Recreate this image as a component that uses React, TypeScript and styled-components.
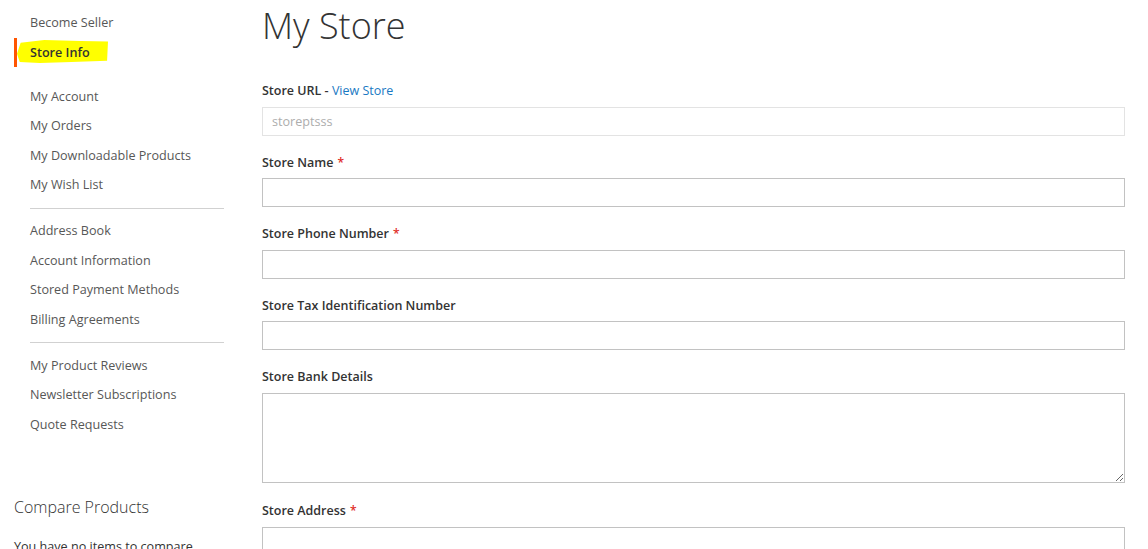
import React from "react";
import styled, { createGlobalStyle } from "styled-components";

const Global = createGlobalStyle`
  html, body { margin: 0; padding: 0; background: #fff; }
  body { font-family: "Open Sans", "Noto Sans", sans-serif; color: #333; font-size: 14px; }
  * { box-sizing: border-box; }
`;

const Page = styled.div`
  display: flex;
  gap: 38px;
  padding: 0 23px 0 14px;
  height: 549px;
  overflow: hidden;
`;

const Sidebar = styled.aside`
  width: 210px;
  flex: none;
  padding-top: 8px;
`;

const Nav = styled.ul`
  list-style: none;
  margin: 0;
  padding: 0;
`;

const NavItem = styled.li<{ $current?: boolean; $gapAfter?: boolean }>`
  position: relative;
  height: 29.5px;
  line-height: 29.5px;
  padding-left: 13px;
  font-size: 12.6px;
  color: ${(p) => (p.$current ? "#333" : "#575757")};
  font-weight: ${(p) => (p.$current ? 600 : 400)};
  border-left: 3px solid ${(p) => (p.$current ? "#ff5501" : "transparent")};
  margin-bottom: ${(p) => (p.$gapAfter ? "14.5px" : "0")};
  white-space: nowrap;
  span { position: relative; }
`;

const Highlight = styled.i`
  position: absolute;
  left: 0px;
  top: 2.5px;
  width: 91px;
  height: 23px;
  background: #ffff00;
  clip-path: polygon(4% 12%, 30% 0%, 70% 4%, 100% 6%, 99% 90%, 60% 96%, 25% 100%, 3% 96%, 0% 60%);
`;

const Divider = styled.li`
  height: 1px;
  background: #d1d1d1;
  margin: 8px 0 7.5px 16px;
`;

const CompareTitle = styled.h2`
  margin: 57px 0 0 0;
  font-weight: 300;
  font-size: 16px;
  line-height: 22px;
  color: #333;
`;

const CompareText = styled.p`
  margin: 20px 0 0;
  font-size: 12.6px;
  color: #333;
`;

const Main = styled.main`
  flex: 1;
  min-width: 0;
`;

const Title = styled.h1`
  margin: 3.5px 0 33.5px;
  font-weight: 300;
  font-size: 36px;
  line-height: 44px;
  color: #333;
`;

const Field = styled.div<{ $tall?: boolean }>`
  margin-bottom: 17px;
  padding-bottom: ${(p) => (p.$tall ? "1.5px" : "0")};
`;

const Label = styled.label`
  display: block;
  font-size: 12.5px;
  font-weight: 600;
  line-height: 20px;
  height: 20px;
  margin-bottom: 5.5px;
  color: #333;
`;

const Req = styled.span`
  color: #e02b27;
  margin-left: 4px;
  font-size: 12px;
`;

const Link = styled.a`
  color: #1979c3;
  text-decoration: none;
  font-weight: 400;
`;

const Input = styled.input`
  display: block;
  width: 100%;
  height: 29px;
  margin: 0;
  border: 1px solid ${(p) => (p.disabled ? "#e3e3e3" : "#c2c2c2")};
  background: #fff;
  padding: 0 9px;
  font-family: inherit;
  font-size: 12.6px;
  color: #333;
  &:disabled { color: #adadad; opacity: 1; }
`;

const TextArea = styled.textarea`
  display: block;
  width: 100%;
  height: 90px;
  margin: 0;
  border: 1px solid #c2c2c2;
  background: #fff;
  font-family: inherit;
  font-size: 13px;
  resize: vertical;
`;

const sidebarGroups = [
  ["My Account", "My Orders", "My Downloadable Products", "My Wish List"],
  ["Address Book", "Account Information", "Stored Payment Methods", "Billing Agreements"],
  ["My Product Reviews", "Newsletter Subscriptions", "Quote Requests"],
];

export default function App() {
  return (
    <>
      <Global />
      <Page>
        <Sidebar>
          <Nav>
            <NavItem>Become Seller</NavItem>
            <NavItem $current $gapAfter>
              <Highlight />
              <span>Store Info</span>
            </NavItem>
            {sidebarGroups.map((g, gi) => (
              <React.Fragment key={gi}>
                {gi > 0 && <Divider />}
                {g.map((t) => (
                  <NavItem key={t}>{t}</NavItem>
                ))}
              </React.Fragment>
            ))}
          </Nav>
          <CompareTitle>Compare Products</CompareTitle>
          <CompareText>You have no items to compare.</CompareText>
        </Sidebar>
        <Main>
          <Title>My Store</Title>
          <Field>
            <Label>
              Store URL - <Link href="#">View Store</Link>
            </Label>
            <Input disabled value="storeptsss" readOnly />
          </Field>
          <Field>
            <Label>
              Store Name<Req>*</Req>
            </Label>
            <Input />
          </Field>
          <Field>
            <Label>
              Store Phone Number<Req>*</Req>
            </Label>
            <Input />
          </Field>
          <Field>
            <Label>Store Tax Identification Number</Label>
            <Input />
          </Field>
          <Field $tall>
            <Label>Store Bank Details</Label>
            <TextArea />
          </Field>
          <Field>
            <Label>
              Store Address<Req>*</Req>
            </Label>
            <Input />
          </Field>
        </Main>
      </Page>
    </>
  );
}
